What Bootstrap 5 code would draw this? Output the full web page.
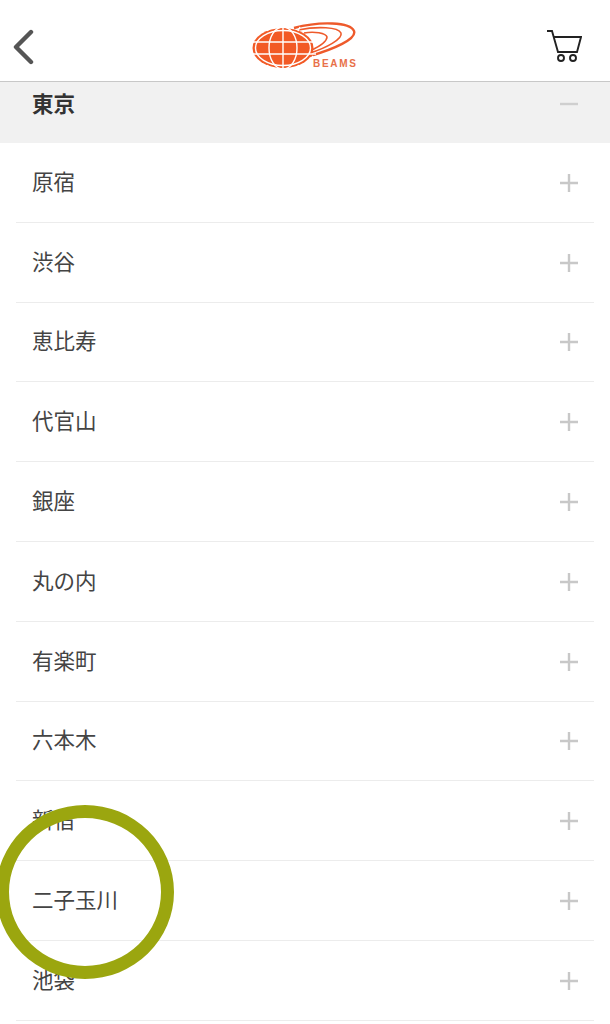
<!DOCTYPE html>
<html lang="ja">
<head>
    <meta charset="UTF-8">
    <meta name="viewport" content="width=device-width, initial-scale=1.0">
    <title>BEAMS 店舗一覧</title>
    <link href="https://cdn.jsdelivr.net/npm/bootstrap@5.3.0/dist/css/bootstrap.min.css" rel="stylesheet">
    <style>
        html, body {
            height: 1024px;
            overflow: hidden;
        }
        body {
            background-color: #fff;
            font-family: "Liberation Sans", "Noto Sans CJK JP", sans-serif;
            color: #444;
        }
        .app-header {
            height: 82px;
            padding: 13px 28px 0 12px;
            border-bottom: 1px solid #c8c8c8;
        }
        .logo-mark {
            margin-left: 24px;
        }
        .logo-text {
            font-family: "Liberation Sans", sans-serif;
            font-size: 10px;
            font-weight: 700;
            letter-spacing: 1.7px;
            fill: #e8704a;
        }
        .area-head {
            height: 61px;
            padding: 10px 31px 0 32px;
            background-color: #f1f1f1;
            color: #333;
            font-size: 21.5px;
            font-weight: 700;
            line-height: 26px;
        }
        .minus-icon {
            margin-top: 2px;
        }
        .shop-list {
            padding: 0 16px;
        }
        .shop-row {
            height: 79.8px;
            padding: 1px 15px 0 16px;
            border-bottom: 1px solid #ececec;
            font-size: 21.5px;
        }
        .tap-ring {
            position: absolute;
            left: -4px;
            top: 805px;
            width: 178px;
            height: 174px;
            border: 13.5px solid #9ba60f;
            border-radius: 50%;
        }
    </style>
</head>
<body class="position-relative">
    <header class="app-header d-flex align-items-center justify-content-between">
        <svg width="24" height="36" viewBox="0 0 24 36" fill="none" stroke="#555" stroke-width="4.4" stroke-linecap="round" stroke-linejoin="round">
            <path d="M19 3 L4 18 L19 33"/>
        </svg>
        <svg class="logo-mark" width="110" height="50" viewBox="250 22 110 50">
            <g fill="none" stroke="#ee5a2b">
                <path d="M296 28 C322 21 352 22 356 31 C359 39 336 49 312 56" stroke-width="2.4"/>
                <path d="M300 30 C320 26 340 27 343 33 C345 39 328 48 312 53" stroke-width="1.6"/>
                <path d="M306 33 C316 31 328 33 329 37 C329 42 320 47 314 50" stroke-width="1.6"/>
            </g>
            <ellipse cx="285" cy="48" rx="30.5" ry="20" fill="#f25a26"/>
            <g fill="none" stroke="#fff" stroke-width="1.4">
                <ellipse cx="285" cy="48" rx="27.5" ry="17.5"/>
                <ellipse cx="285" cy="48" rx="14" ry="21"/>
                <path d="M285 27 V69 M252 42 H318 M252 54 H318"/>
                <path d="M256 40 L252 36 M314 40 L318 36 M256 56 L252 60 M314 56 L318 60 M270 31 L268 27 M300 31 L302 27 M270 65 L268 69 M300 65 L302 69"/>
            </g>
            <text class="logo-text" x="315" y="67">BEAMS</text>
        </svg>
        <svg width="36" height="34" viewBox="0 0 36 34" fill="none" stroke="#222" stroke-width="1.9">
            <path d="M1 1 H6 L12 22 H31 L35 7 H7.5"/>
            <circle cx="15" cy="28" r="3"/>
            <circle cx="27" cy="28" r="3"/>
        </svg>
    </header>

    <div class="area-head d-flex justify-content-between">
        <span>東京</span>
        <svg class="minus-icon" width="20" height="20" viewBox="0 0 20 20" stroke="#cfcfcf" stroke-width="2.4"><path d="M1 10 H19"/></svg>
    </div>

    <div class="shop-list" id="shopList"></div>

    <div class="tap-ring"></div>

    <script>
        const shops = ["原宿", "渋谷", "恵比寿", "代官山", "銀座", "丸の内", "有楽町", "六本木", "新宿", "二子玉川", "池袋"];
        const list = document.getElementById("shopList");
        shops.forEach(name => {
            const row = document.createElement("div");
            row.className = "shop-row d-flex align-items-center justify-content-between";
            row.innerHTML = `<span>${name}</span><svg width="20" height="20" viewBox="0 0 20 20" stroke="#c8c8c8" stroke-width="2.4"><path d="M1 10 H19 M10 1 V19"/></svg>`;
            list.appendChild(row);
        });
    </script>
</body>
</html>
